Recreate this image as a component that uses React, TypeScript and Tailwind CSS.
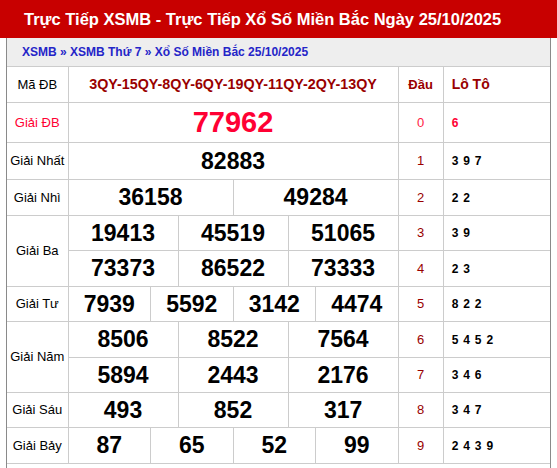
const font = { fontFamily: '"Liberation Sans", Arial, sans-serif' };

type Row = {
  label?: string;
  labelSpan?: number;
  nums: string[];
  dau: string;
  loto: string;
  h: string;
  special?: boolean;
};

const rows: Row[] = [
  { label: "Giải ĐB", nums: ["77962"], dau: "0", loto: "6", h: "h-[40px]", special: true },
  { label: "Giải Nhất", nums: ["82883"], dau: "1", loto: "3 9 7", h: "h-[37px]" },
  { label: "Giải Nhì", nums: ["36158", "49284"], dau: "2", loto: "2 2", h: "h-[36px]" },
  { label: "Giải Ba", labelSpan: 2, nums: ["19413", "45519", "51065"], dau: "3", loto: "3 9", h: "h-[35px]" },
  { nums: ["73373", "86522", "73333"], dau: "4", loto: "2 3", h: "h-[36px]" },
  { label: "Giải Tư", nums: ["7939", "5592", "3142", "4474"], dau: "5", loto: "8 2 2", h: "h-[35px]" },
  { label: "Giải Năm", labelSpan: 2, nums: ["8506", "8522", "7564"], dau: "6", loto: "5 4 5 2", h: "h-[36px]" },
  { nums: ["5894", "2443", "2176"], dau: "7", loto: "3 4 6", h: "h-[35px]" },
  { label: "Giải Sáu", nums: ["493", "852", "317"], dau: "8", loto: "3 4 7", h: "h-[35px]" },
  { label: "Giải Bảy", nums: ["87", "65", "52", "99"], dau: "9", loto: "2 4 3 9", h: "h-[36px]" },
];

export default function App() {
  return (
    <div className="min-h-[468px] bg-white" style={font}>
      {/* Title bar */}
      <h1 className="flex h-[38px] items-center whitespace-nowrap bg-[#c80000] pl-[24px] text-[16.5px] font-bold text-white">
        Trực Tiếp XSMB - Trực Tiếp Xổ Số Miền Bắc Ngày 25/10/2025
      </h1>

      <div className="mx-[6px] min-h-[430px] border-x border-[#8a8a8a]">
        {/* Breadcrumb */}
        <div className="flex h-[28px] items-center whitespace-pre bg-[#eeeeee] pl-[15px] text-[12px] font-bold text-[#2525c8]">
          <a href="#">XSMB</a>
          <span> » </span>
          <a href="#">XSMB Thứ 7</a>
          <span> » </span>
          <a href="#">Xổ Số Miền Bắc 25/10/2025</a>
        </div>

        <table className="w-[543px] table-fixed border-collapse text-center">
          <colgroup>
            <col className="w-[61px]" />
            {Array.from({ length: 12 }).map((_, i) => (
              <col key={i} className="w-[27.5px]" />
            ))}
            <col className="w-[45px]" />
            <col className="w-[107px]" />
          </colgroup>
          <tbody>
            <tr className="h-[36px]">
              <td className="border border-l-0 border-[#cccccc] text-[13px] text-black">Mã ĐB</td>
              <td colSpan={12} className="border border-[#cccccc] text-[14.3px] font-bold text-[#990000]">
                3QY-15QY-8QY-6QY-19QY-11QY-2QY-13QY
              </td>
              <td className="border border-[#cccccc] text-[13px] font-bold text-[#990000]">Đầu</td>
              <td className="border border-r-0 border-[#cccccc] pl-[8px] text-left text-[14px] font-bold text-[#990000]">
                Lô Tô
              </td>
            </tr>
            {rows.map((r, i) => {
              const span = 12 / r.nums.length;
              return (
                <tr key={i} className={r.h}>
                  {r.label && (
                    <td
                      rowSpan={r.labelSpan ?? 1}
                      className={`border border-l-0 border-[#cccccc] text-[13px] ${
                        r.special ? "text-[#ff0033]" : "text-black"
                      }`}
                    >
                      {r.label}
                    </td>
                  )}
                  {r.nums.map((n, j) => (
                    <td
                      key={j}
                      colSpan={span}
                      className={`border border-[#cccccc] font-bold leading-none ${
                        r.special ? "text-[29px] text-[#ff0033]" : "text-[23px] text-black"
                      }`}
                    >
                      {n}
                    </td>
                  ))}
                  <td
                    className={`border border-[#cccccc] text-[13px] ${
                      r.special ? "text-[#ff2244]" : "text-[#990000]"
                    }`}
                  >
                    {r.dau}
                  </td>
                  <td
                    className={`border border-r-0 border-[#cccccc] pl-[8px] text-left text-[12px] font-bold tracking-[0.8px] ${
                      r.special ? "text-[#ff0033]" : "text-black"
                    }`}
                  >
                    {r.loto}
                  </td>
                </tr>
              );
            })}
          </tbody>
        </table>
      </div>
    </div>
  );
}
